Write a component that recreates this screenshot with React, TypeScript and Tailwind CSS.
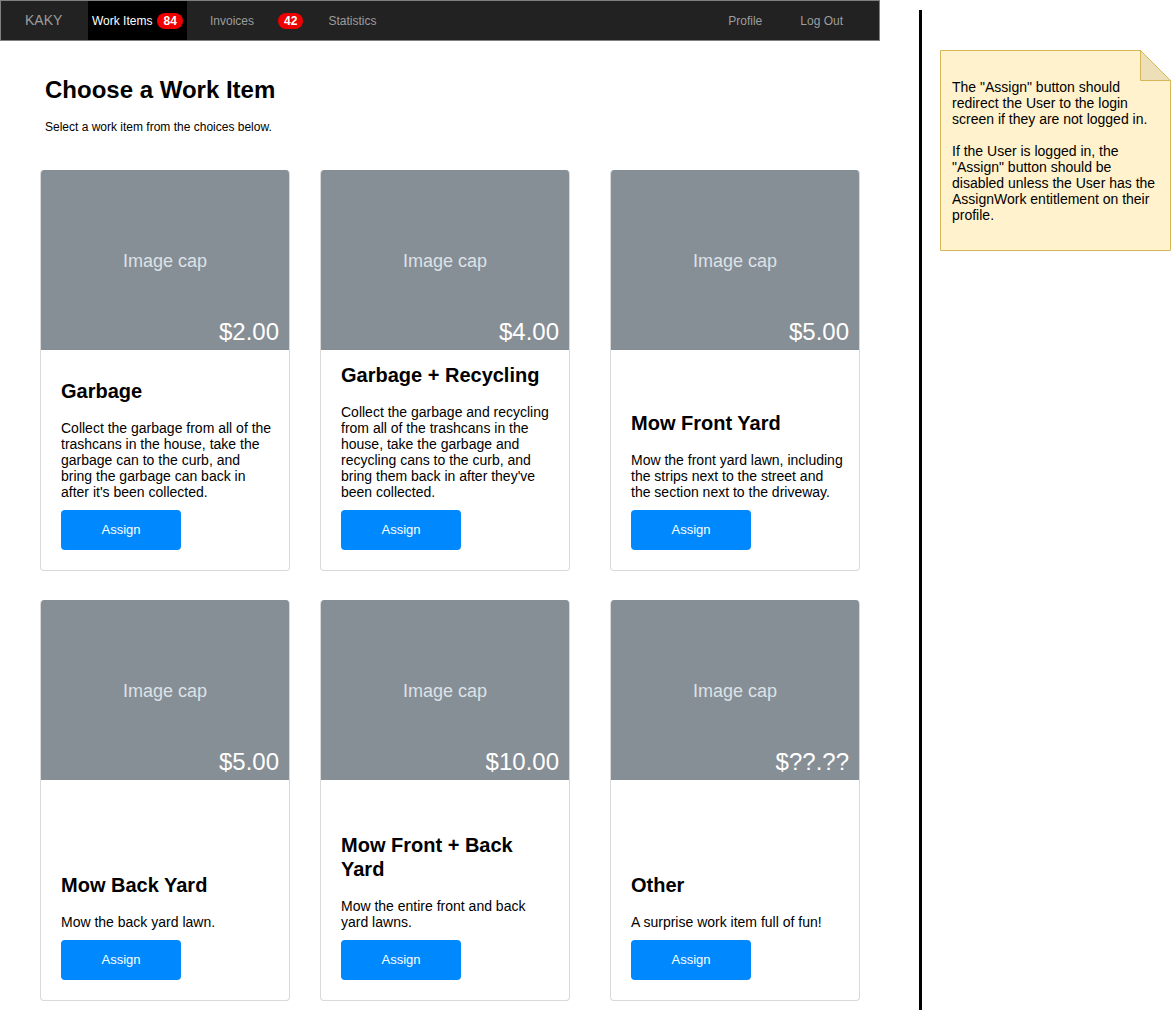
const items = [
  {
    price: "$2.00",
    title: "Garbage",
    text: "Collect the garbage from all of the trashcans in the house, take the garbage can to the curb, and bring the garbage can back in after it's been collected.",
  },
  {
    price: "$4.00",
    title: "Garbage + Recycling",
    text: "Collect the garbage and recycling from all of the trashcans in the house, take the garbage and recycling cans to the curb, and bring them back in after they've been collected.",
  },
  {
    price: "$5.00",
    title: "Mow Front Yard",
    text: "Mow the front yard lawn, including the strips next to the street and the section next to the driveway.",
  },
  {
    price: "$5.00",
    title: "Mow Back Yard",
    text: "Mow the back yard lawn.",
  },
  {
    price: "$10.00",
    title: "Mow Front + Back Yard",
    text: "Mow the entire front and back yard lawns.",
  },
  {
    price: "$??.??",
    title: "Other",
    text: "A surprise work item full of fun!",
  },
];

const offsets = ["", "ml-[30px]", "ml-[40px]"];

function WorkCard({ item, className }: { item: (typeof items)[number]; className: string }) {
  return (
    <div className={`w-[250px] h-[401px] border border-t-0 border-[#d9d9d9] rounded-[4px] overflow-hidden flex flex-col bg-white ${className}`}>
      <div className="relative h-[180px] shrink-0 bg-[#868e96] flex items-center justify-center">
        <span className="mt-[2px] text-[18px] text-[#dee2e6]">Image cap</span>
        <span className="absolute right-[10px] bottom-[4px] text-[24px] leading-[28px] text-white">
          {item.price}
        </span>
      </div>
      <div className="flex-1 min-h-0 flex flex-col justify-end pl-[20px] pb-[20px]">
        <h5 className="w-[208px] text-[20px] leading-[24px] font-bold text-black mb-[17px]">{item.title}</h5>
        <p className="w-[213.5px] text-[14px] leading-[16px] text-black mb-[10px]">{item.text}</p>
        <button className="w-[120px] h-[40px] shrink-0 rounded-[4px] bg-[#0088ff] text-white text-[13px]">
          Assign
        </button>
      </div>
    </div>
  );
}

function Badge({ n }: { n: string }) {
  return (
    <span className="inline-flex items-center justify-center h-[16px] px-[6px] rounded-full bg-[#ee0000] text-white text-[12px] font-bold leading-none">
      {n}
    </span>
  );
}

export default function App() {
  return (
    <div className="flex bg-white min-h-[1014px] font-['Liberation_Sans',Arial,sans-serif] text-black">
      <div className="w-[880px] shrink-0">
        {/* top nav */}
        <nav className="h-[41px] bg-[#222222] border border-[#808080] flex items-stretch text-[12px] text-[#9d9d9d]">
          <div className="w-[87px] pl-[24px] flex items-center text-[14px] text-[#9d9d9d]">KAKY</div>
          <div className="w-[99px] bg-black pl-[4px] flex items-center gap-[5px] text-white">
            Work Items
            <Badge n="84" />
          </div>
          <div className="flex items-center ml-[23px]">Invoices</div>
          <div className="flex items-center ml-[24px]">
            <Badge n="42" />
          </div>
          <div className="flex items-center ml-[25px]">Statistics</div>
          <div className="flex items-center ml-auto">Profile</div>
          <div className="flex items-center ml-[38px] mr-[36px]">Log Out</div>
        </nav>

        <div className="pl-[45px] pt-[35px]">
          <h1 className="text-[24px] leading-[28px] font-bold">Choose a Work Item</h1>
          <p className="mt-[15px] text-[12px] leading-[16px]">Select a work item from the choices below.</p>
        </div>

        <div className="pl-[40px] pt-[35px] flex flex-col gap-[29px]">
          <div className="flex">
            {items.slice(0, 3).map((it, i) => (
              <WorkCard key={it.title} item={it} className={offsets[i]} />
            ))}
          </div>
          <div className="flex">
            {items.slice(3).map((it, i) => (
              <WorkCard key={it.title} item={it} className={offsets[i]} />
            ))}
          </div>
        </div>
      </div>

      {/* divider */}
      <div className="ml-[39px] mt-[10px] w-[3px] h-[1000px] bg-black shrink-0" />

      {/* sticky note */}
      <div className="relative ml-[18px] mt-[50px] w-[231px] h-[201px] shrink-0">
        <svg className="absolute inset-0" width="231" height="201" viewBox="0 0 231 201">
          <path d="M0.5 0.5 H200.5 L230.5 30.5 V200.5 H0.5 Z" fill="#fff2cc" stroke="#d6b656" />
          <path d="M200.5 0.5 V30.5 H230.5 Z" fill="#ede0b8" stroke="#d6b656" />
        </svg>
        <div className="relative h-full flex flex-col justify-center pl-[12px] pr-[8px] text-[14px] leading-[16px]">
          <p className="mb-[16px]">
            The "Assign" button should redirect the User to the login screen if they are not logged in.
          </p>
          <p>
            If the User is logged in, the "Assign" button should be disabled unless the User has the AssignWork entitlement on their profile.
          </p>
        </div>
      </div>
    </div>
  );
}
